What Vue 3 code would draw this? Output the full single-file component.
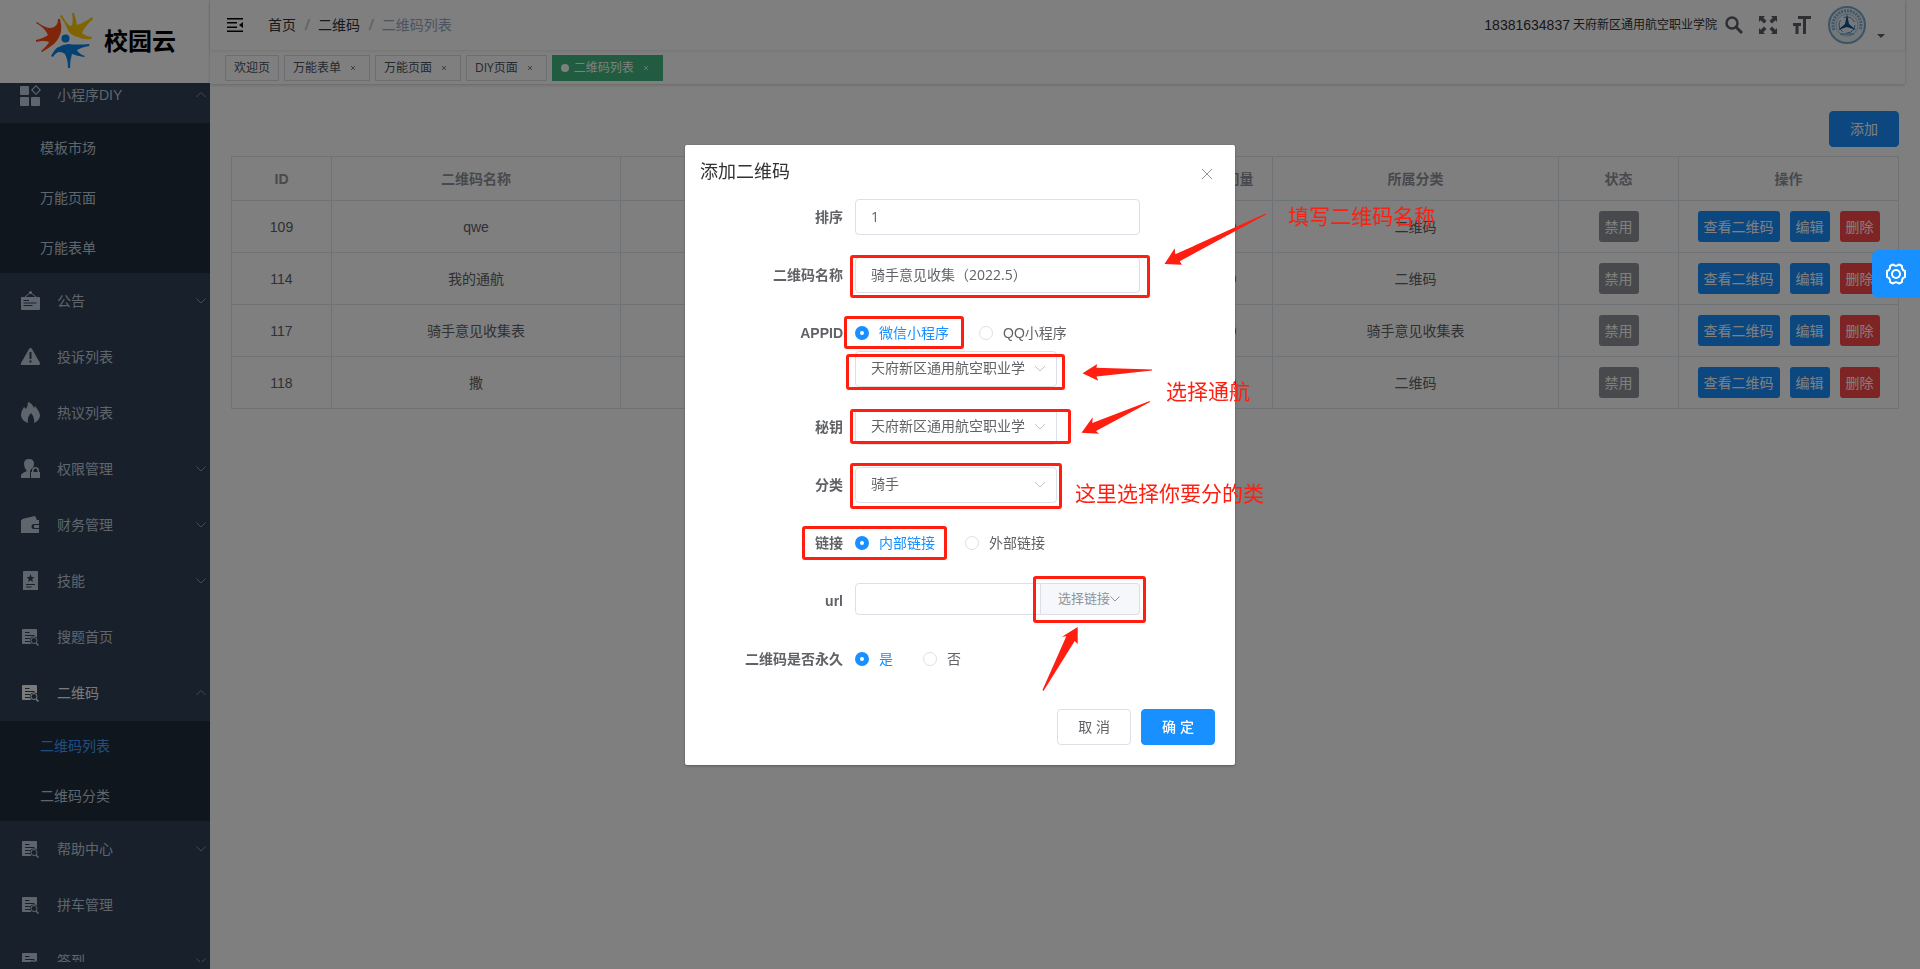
<script setup>
import { ref } from 'vue'

const menu = [
  { icon: 'grid', label: '小程序DIY', open: true, children: ['模板市场', '万能页面', '万能表单'] },
  { icon: 'board', label: '公告', arrow: true },
  { icon: 'warn', label: '投诉列表' },
  { icon: 'fire', label: '热议列表' },
  { icon: 'lock', label: '权限管理', arrow: true },
  { icon: 'wallet', label: '财务管理', arrow: true },
  { icon: 'skill', label: '技能', arrow: true },
  { icon: 'doc', label: '搜题首页' },
  { icon: 'doc', label: '二维码', open: true, active: true, children: ['二维码列表', '二维码分类'] },
  { icon: 'doc', label: '帮助中心', arrow: true },
  { icon: 'doc', label: '拼车管理' },
  { icon: 'doc', label: '签到', arrow: true }
]
const current = '二维码列表'

const tags = [
  { label: '欢迎页', fixed: true },
  { label: '万能表单' },
  { label: '万能页面' },
  { label: 'DIY页面' },
  { label: '二维码列表', active: true }
]

const rows = [
  { id: 109, name: 'qwe', type: '二维码' },
  { id: 114, name: '我的通航', type: '二维码' },
  { id: 117, name: '骑手意见收集表', type: '骑手意见收集表' },
  { id: 118, name: '撒', type: '二维码' }
]

const form = ref({
  sort: '1',
  name: '骑手意见收集（2022.5）',
  platform: 'wx',
  appid: '天府新区通用航空职业学院',
  secret: '天府新区通用航空职业学院',
  category: '骑手',
  link: 'inner',
  url: '',
  forever: 'yes'
})
</script>

<template>
  <div class="app">
    <aside class="sidebar">
      <a class="logo" href="#">
        <svg width="58" height="58" viewBox="0 0 58 58" aria-hidden="true">
          <path fill="#ff4a12" d="M1 9 Q9 15 15 15 Q22 14 22 6 L24 6 Q26 13 25 19 Q23 26 18 31 Q13 35 6 39 L5 38 Q11 33 13 29 Q8 27 0 29 L0 27 Q8 25 12 22 Q9 15 0 10 Z" />
          <path fill="#ffc800" d="M26 2 Q29 9 34 13 Q38 13 36 0 L38 0 Q40 6 41 12 Q48 10 56 4 L57 6 Q49 13 46 20 Q49 23 56 24 L55 26 Q48 27 42 24 Q34 23 31 15 Q28 8 24 3 Z" />
          <circle cx="29.500" cy="25.500" r="4" fill="#0a84e8" />
          <path fill="#0a84e8" d="M53 31 Q54 32 53 33 Q46 34 41 37 Q43 41 49 43 L48 44 Q41 43 36 41 Q34 47 34 55 L32 55 Q32 47 29 41 Q22 36 17 44 L15 43 Q20 32 32 31 Q43 32 53 31 Z" />
        </svg>
        <strong>校园云</strong>
      </a>
      <nav class="menu">
        <ul class="menu-list">
          <li v-for="item in menu" :key="item.label">
            <a class="menu-item" :class="{ active: item.active }" href="#">
              <svg class="menu-icon" width="22" height="22" viewBox="0 0 22 22" fill="currentColor" aria-hidden="true">
                <g v-if="item.icon === 'grid'">
                  <rect x="1" y="2" width="9" height="9" rx="1" />
                  <rect x="1" y="13" width="9" height="9" rx="1" />
                  <rect x="12" y="13" width="9" height="9" rx="1" />
                  <path d="M17 1 L22 6 L17 11 L12 6 Z M17 2.600 L13.600 6 L17 9.400 L20.400 6 Z" fill-rule="evenodd" />
                </g>
                <g v-else-if="item.icon === 'board'">
                  <path fill-rule="evenodd" d="M2 7 H20 Q21 7 21 8 V19 Q21 20 20 20 H3 Q2 20 2 19 Z M4.500 10 V11 H10 V10 Z M4.500 12.500 V13.500 H17.500 V12.500 Z M4.500 15 V16 H13.500 V15 Z" />
                  <path d="M6 7 L11.500 2.500 L17 7" fill="none" stroke="currentColor" />
                  <circle cx="11.500" cy="2.500" r="1.500" />
                </g>
                <path v-else-if="item.icon === 'warn'" fill-rule="evenodd" d="M11.500 2 Q12.500 2 13 3 L21 17 Q21 19 20 19 H3 Q1 19 2 17 L10 3 Q10.500 2 11.500 2 Z M10.500 6 V13 H12.500 V6 Z M10.500 14.500 V16.500 H12.500 V14.500 Z" />
                <path v-else-if="item.icon === 'fire'" d="M9 0 Q13 1 15 6 L16 4 Q21 10 21 14 Q20 19 15 21 Q16 16 12 11 Q8 15 9 21 Q2 18 2 13 Q2 9 5 5 L7 7 Q9 4 9 0 Z" />
                <g v-else-if="item.icon === 'lock'">
                  <path d="M10 1 Q15 1 15 6 Q15 8 13.500 10 Q11 11 11 14 V20 H2 V17 Q3 15 8 13 Q5 10 5 6 Q5 1 10 1 Z" />
                  <path fill-rule="evenodd" d="M12 14 H13 V12.500 Q13 9 16.500 9 Q20 9 20 12.500 V14 H21 V20 H12 Z M14.500 14 H18.500 V12.500 Q18.500 10.500 16.500 10.500 Q14.500 10.500 14.500 12.500 Z" />
                </g>
                <g v-else-if="item.icon === 'wallet'">
                  <path d="M3 5 L16 2 L18 6 H3 Z" />
                  <path fill-rule="evenodd" d="M2 6 H20 V10 H15 Q12.500 10 12.500 12.500 Q12.500 15 15 15 H20 V19 H2 Z" />
                  <path d="M15.500 11 H20 V14 H15.500 Q14 12.500 15.500 11 Z" />
                </g>
                <path v-else-if="item.icon === 'skill'" fill-rule="evenodd" d="M5 1 H18 Q19 1 19 2 V20 H4 V2 Q4 1 5 1 Z M11.500 4 L12.600 7 H15.500 L13.200 9 L14 12 L11.500 10.200 L9 12 L9.800 9 L7.500 7 H10.400 Z M7 14 V15 H16 V14 Z M7 16.500 V17.500 H12.500 V16.500 Z" />
                <g v-else>
                  <path fill-rule="evenodd" d="M4 3 H17 Q18 3 18 4 V18 H4 Q3 18 3 17 V4 Q3 3 4 3 Z M6 6 V7 H10.500 V6 Z M6 9 V10 H15.500 V9 Z M6 12 V13 H11 V12 Z M6 15 V16 H11 V15 Z" />
                  <circle cx="15" cy="14.500" r="4" fill="#304156" />
                  <circle cx="15" cy="14.500" r="3" fill="none" stroke="currentColor" />
                  <path d="M17 17 L19.500 19.500" stroke="currentColor" stroke-width="1.500" />
                </g>
              </svg>
              <span class="menu-label">{{ item.label }}</span>
              <svg v-if="item.arrow || item.open" class="menu-arrow" width="10" height="6" viewBox="0 0 10 6" fill="none" aria-hidden="true">
                <path :d="item.open ? 'M0.500 5 L5 0.500 L9.500 5' : 'M0.500 0.500 L5 5 L9.500 0.500'" stroke="#909399" />
              </svg>
            </a>
            <ul v-if="item.children" class="submenu">
              <li v-for="child in item.children" :key="child">
                <a href="#" :class="{ current: child === current }">{{ child }}</a>
              </li>
            </ul>
          </li>
        </ul>
      </nav>
    </aside>

    <div class="main">
      <header class="top">
        <div class="navbar">
          <button class="icon-btn fold" type="button" aria-label="折叠菜单">
            <svg width="16" height="14" viewBox="0 0 16 14" fill="#000" aria-hidden="true">
              <path d="M0 0 H16 V1.500 H0 Z M0 4 H10 V5.500 H0 Z M0 8.500 H10 V10 H0 Z M0 12.500 H16 V14 H0 Z M16 4 V10 L12 7 Z" />
            </svg>
          </button>
          <nav class="breadcrumb">
            <a href="#">首页</a><i>/</i><a href="#">二维码</a><i>/</i><span>二维码列表</span>
          </nav>
          <div class="user">
            <span class="phone">18381634837</span>
            <span class="org">天府新区通用航空职业学院</span>
            <button class="icon-btn search" type="button" aria-label="搜索">
              <svg width="18" height="18" viewBox="0 0 18 18" fill="none" stroke="#5a5e66" aria-hidden="true">
                <circle cx="7" cy="7" r="5.500" stroke-width="2.500" />
                <path d="M11 11 L17 17" stroke-width="3" />
              </svg>
            </button>
            <button class="icon-btn" type="button" aria-label="全屏">
              <svg width="18" height="18" viewBox="0 0 18 18" fill="#5a5e66" aria-hidden="true">
                <path d="M0 0 H6 L4.300 1.700 L7.500 5 L5 7.500 L1.700 4.300 L0 6 Z" />
                <path d="M18 0 V6 L16.300 4.300 L13 7.500 L10.500 5 L13.700 1.700 L12 0 Z" />
                <path d="M0 18 V12 L1.700 13.700 L5 10.500 L7.500 13 L4.300 16.300 L6 18 Z" />
                <path d="M18 18 H12 L13.700 16.300 L10.500 13 L13 10.500 L16.300 13.700 L18 12 Z" />
              </svg>
            </button>
            <button class="icon-btn" type="button" aria-label="字号">
              <svg width="18" height="18" viewBox="0 0 18 18" fill="#5a5e66" aria-hidden="true">
                <path d="M5 0 H18 V3 H13 V18 H10 V3 H5 Z M0 7 H8 V10 H5.500 V18 H2.500 V10 H0 Z" />
              </svg>
            </button>
            <button class="icon-btn avatar" type="button" aria-label="用户菜单">
              <svg width="38" height="38" viewBox="0 0 38 38" fill="none" aria-hidden="true">
                <circle cx="19" cy="19" r="18" fill="#e4eef5" stroke="#7ba8ca" stroke-width="2" />
                <path d="M6 24 A14 14 0 1 1 32 24" stroke="#5d93bd" stroke-width="3" stroke-dasharray="2 1" opacity="0.700" />
                <circle cx="19" cy="19" r="11" fill="#e9f2f8" stroke="#9cc0da" />
                <circle cx="19" cy="19" r="8" stroke="#4a8cc4" stroke-dasharray="13 4" />
                <path d="M19 8 L21 18 L28 24 L19 21 L10 24 L17 18 Z" fill="#14508f" />
                <path d="M12 28 H26" stroke="#4a8cc4" />
              </svg>
              <svg class="caret" width="8" height="4" viewBox="0 0 8 4" fill="#5a5e66" aria-hidden="true"><path d="M0 0 H8 L4 4 Z" /></svg>
            </button>
          </div>
        </div>
        <nav class="tags">
          <a v-for="t in tags" :key="t.label" class="tag" :class="{ active: t.active }" href="#">
            <span v-if="t.active" class="dot"></span>{{ t.label }}
            <svg v-if="!t.fixed" class="tag-close" width="16" height="16" viewBox="0 0 16 16" stroke="currentColor" aria-hidden="true"><path d="M6 6 L10 10 M10 6 L6 10" /></svg>
          </a>
        </nav>
      </header>

      <main class="content">
        <div class="toolbar"><button class="btn primary" type="button">添加</button></div>
        <table class="grid">
          <colgroup>
            <col class="c-id" /><col class="c-name" /><col /><col /><col class="c-visit" /><col /><col class="c-state" /><col class="c-op" />
          </colgroup>
          <thead>
            <tr><th>ID</th><th>二维码名称</th><th></th><th></th><th>访问量</th><th>所属分类</th><th>状态</th><th>操作</th></tr>
          </thead>
          <tbody>
            <tr v-for="r in rows" :key="r.id">
              <td>{{ r.id }}</td>
              <td>{{ r.name }}</td>
              <td></td>
              <td></td>
              <td><a class="count" href="#">0</a></td>
              <td>{{ r.type }}</td>
              <td><button class="mini info" type="button">禁用</button></td>
              <td>
                <div class="ops">
                  <button class="mini primary" type="button">查看二维码</button>
                  <button class="mini primary" type="button">编辑</button>
                  <button class="mini danger" type="button">删除</button>
                </div>
              </td>
            </tr>
          </tbody>
        </table>
      </main>
    </div>

    <div class="overlay">
      <section class="dialog" role="dialog" aria-labelledby="dlg-title">
        <header class="dialog-head">
          <h2 id="dlg-title">添加二维码</h2>
          <button class="icon-btn close" type="button" aria-label="关闭">
            <svg width="12" height="12" viewBox="0 0 12 12" stroke="#909399" aria-hidden="true"><path d="M1 1 L11 11 M11 1 L1 11" /></svg>
          </button>
        </header>
        <form class="form" @submit.prevent>
          <div class="item">
            <label class="label" for="f-sort">排序</label>
            <input id="f-sort" v-model="form.sort" class="field" type="text" />
          </div>
          <div class="item">
            <label class="label" for="f-name">二维码名称</label>
            <input id="f-name" v-model="form.name" class="field" type="text" />
          </div>
          <div class="item">
            <label class="label" for="f-appid">APPID</label>
            <div class="stack">
              <div class="radios">
                <label class="radio"><input v-model="form.platform" type="radio" name="platform" value="wx" /><span>微信小程序</span></label>
                <label class="radio"><input v-model="form.platform" type="radio" name="platform" value="qq" /><span>QQ小程序</span></label>
              </div>
              <div class="select">
                <select id="f-appid" v-model="form.appid" class="field"><option>天府新区通用航空职业学院</option></select>
                <svg width="12" height="7" viewBox="0 0 12 7" fill="none" stroke="#c0c4cc" aria-hidden="true"><path d="M1 1 L6 6 L11 1" /></svg>
              </div>
            </div>
          </div>
          <div class="item">
            <label class="label" for="f-secret">秘钥</label>
            <div class="select">
              <select id="f-secret" v-model="form.secret" class="field"><option>天府新区通用航空职业学院</option></select>
              <svg width="12" height="7" viewBox="0 0 12 7" fill="none" stroke="#c0c4cc" aria-hidden="true"><path d="M1 1 L6 6 L11 1" /></svg>
            </div>
          </div>
          <div class="item">
            <label class="label" for="f-cat">分类</label>
            <div class="select">
              <select id="f-cat" v-model="form.category" class="field"><option>骑手</option></select>
              <svg width="12" height="7" viewBox="0 0 12 7" fill="none" stroke="#c0c4cc" aria-hidden="true"><path d="M1 1 L6 6 L11 1" /></svg>
            </div>
          </div>
          <div class="item" role="radiogroup" aria-labelledby="l-link">
            <span id="l-link" class="label">链接</span>
            <div class="radios">
              <label class="radio"><input v-model="form.link" type="radio" name="link" value="inner" /><span>内部链接</span></label>
              <label class="radio"><input v-model="form.link" type="radio" name="link" value="outer" /><span>外部链接</span></label>
            </div>
          </div>
          <div class="item">
            <label class="label" for="f-url">url</label>
            <div class="group">
              <input id="f-url" v-model="form.url" class="field" type="text" />
              <button class="append" type="button">选择链接<svg width="10" height="6" viewBox="0 0 10 6" fill="none" stroke="currentColor" aria-hidden="true"><path d="M0.500 0.500 L5 5 L9.500 0.500" /></svg></button>
            </div>
          </div>
          <div class="item" role="radiogroup" aria-labelledby="l-forever">
            <span id="l-forever" class="label">二维码是否永久</span>
            <div class="radios">
              <label class="radio"><input v-model="form.forever" type="radio" name="forever" value="yes" /><span>是</span></label>
              <label class="radio"><input v-model="form.forever" type="radio" name="forever" value="no" /><span>否</span></label>
            </div>
          </div>
        </form>
        <footer class="dialog-foot">
          <button class="btn plain" type="button">取 消</button>
          <button class="btn primary strong" type="button">确 定</button>
        </footer>

        <svg class="marks" width="550" height="620" viewBox="0 0 550 620" aria-hidden="true">
          <g fill="none" stroke="#ff1e10" stroke-width="3">
            <rect x="166.500" y="111.500" width="297" height="40" rx="1.500" />
            <rect x="160.500" y="172.500" width="117" height="30" rx="1.500" />
            <rect x="162.500" y="210.500" width="216" height="33" rx="1.500" />
            <rect x="166.500" y="265.500" width="218" height="32" rx="1.500" />
            <rect x="166.500" y="319.500" width="209" height="43" rx="1.500" />
            <rect x="118.500" y="382.500" width="142" height="31" rx="1.500" />
            <rect x="349.500" y="432.500" width="110" height="44" rx="1.500" />
          </g>
          <g fill="#ff1e10">
            <path d="M479.500 119 L489.700 103.300 L490.300 109.300 L580.700 68.500 L581 69.500 L494.700 116.300 L497 119.700 Z" />
            <path d="M397.500 228.300 L412.300 219 L411.300 222.700 L467 224.500 V225.500 L411.500 231.500 L413.300 235.700 Z" />
            <path d="M396.500 287.700 L407.700 272.300 L407.300 278 L464.700 256 L465 257 L411 286 L414 288.700 Z" />
            <path d="M392.700 482 L377 491.700 L381.300 491.300 L357.500 545 L358.500 546 L389.700 496 L392.700 499 Z" />
          </g>
        </svg>
        <p class="note note-name">填写二维码名称</p>
        <p class="note note-app">选择通航</p>
        <p class="note note-cat">这里选择你要分的类</p>
      </section>
    </div>

    <button class="settings" type="button" aria-label="设置">
      <svg width="24" height="24" viewBox="0 0 24 24" fill="none" stroke="#fff" aria-hidden="true">
        <path stroke-width="2" stroke-linejoin="round" d="M9 2.500 Q12 5 15 2.500 L18 4 Q17.500 8 21 9 V15 Q17.500 16 18 20 L15 21.500 Q12 19 9 21.500 L6 20 Q6.500 16 3 15 V9 Q6.500 8 6 4 Z" />
        <circle cx="12" cy="12" r="4" stroke-width="2" />
      </svg>
    </button>
  </div>
</template>

<style>
body {
  margin: 0;
  background: #fff;
}
</style>

<style scoped>
* {
  box-sizing: border-box;
}
.app {
  display: flex;
  height: 100vh;
  overflow: hidden;
  font: 14px/20px "Liberation Sans", "Noto Sans CJK SC", sans-serif;
  color: #606266;
}
a {
  color: inherit;
  text-decoration: none;
}
ul {
  list-style: none;
  margin: 0;
  padding: 0;
}
button {
  font: inherit;
  cursor: pointer;
  white-space: nowrap;
}
svg {
  display: block;
  flex: none;
}
.icon-btn {
  padding: 0;
  border: 0;
  background: none;
}

/* sidebar */
.sidebar {
  display: flex;
  flex-direction: column;
  flex: none;
  width: 210px;
  padding-bottom: 7px;
  background: #304156;
}
.logo {
  display: flex;
  flex: none;
  align-items: center;
  gap: 10px;
  height: 83px;
  padding-left: 36px;
  background: #fff;
  color: #000;
}
.logo strong {
  font-size: 24px;
  font-weight: 700;
  line-height: 30px;
}
.menu {
  flex: 1;
  min-height: 0;
  overflow: hidden;
}
.menu-list {
  margin-top: -16px;
}
.menu-item {
  display: flex;
  align-items: center;
  height: 56px;
  padding: 0 4px 0 19px;
  color: #bfcbd9;
}
.menu-item.active {
  color: #f4f4f5;
}
.menu-label {
  flex: 1;
  margin-left: 16px;
}
.submenu {
  background: #1f2d3d;
}
.submenu a {
  display: block;
  padding-left: 40px;
  line-height: 50px;
  color: #bfcbd9;
}
.submenu a.current {
  color: #409eff;
}

/* header */
.main {
  flex: 1;
  min-width: 0;
}
.top {
  margin-right: 15px;
  box-shadow: 0 1px 3px rgba(0, 0, 0, 0.2);
}
.navbar {
  display: flex;
  align-items: center;
  height: 50px;
  padding: 0 20px 0 17px;
  box-shadow: 0 1px 3px rgba(0, 21, 41, 0.1);
}
.breadcrumb {
  display: flex;
  margin-left: 25px;
  color: #303133;
}
.breadcrumb i {
  margin: 0 9px;
  font-weight: bold;
  color: #c0c4cc;
}
.breadcrumb span {
  color: #97a8be;
}
.user {
  display: flex;
  align-items: center;
  gap: 16px;
  margin-left: auto;
  color: #303133;
}
.phone {
  margin-right: -13px;
}
.org {
  margin-right: -8px;
  font-size: 12px;
}
.avatar {
  display: flex;
  align-items: flex-end;
  gap: 11px;
  margin-left: 1px;
}
.caret {
  margin-bottom: 6px;
}
.tags {
  display: flex;
  align-items: flex-start;
  gap: 5px;
  height: 34px;
  padding: 5px 15px 0;
}
.tag {
  display: flex;
  align-items: center;
  height: 26px;
  padding: 0 8px;
  border: 1px solid #d8dce5;
  font-family: "Open Sans", "Noto Sans CJK SC", sans-serif;
  font-size: 12px;
  color: #495060;
}
.tag.active {
  border-color: #42b983;
  background: #42b983;
  color: #fff;
}
.dot {
  width: 8px;
  height: 8px;
  margin-right: 5px;
  border-radius: 50%;
  background: #fff;
}
.tag-close {
  margin-left: 4px;
  opacity: 0.7;
}

/* content */
.content {
  padding: 27px 21px 0;
}
.toolbar {
  display: flex;
  justify-content: flex-end;
  margin-bottom: 9px;
}
.btn {
  height: 36px;
  padding: 0 20px;
  border: 1px solid #dcdfe6;
  border-radius: 4px;
  background: #fff;
  color: #606266;
}
.btn.primary {
  border-color: #1890ff;
  background: #1890ff;
  color: #fff;
}
.btn.strong {
  font-weight: 500;
}
.grid {
  width: 100%;
  table-layout: fixed;
  border-collapse: collapse;
  text-align: center;
}
.grid th,
.grid td {
  padding: 0;
  border: 1px solid #dfe6ec;
}
.grid th {
  height: 44px;
  color: #909399;
}
.grid td {
  height: 52px;
}
.c-id {
  width: 100px;
}
.c-name {
  width: 289px;
}
.c-visit {
  width: 80px;
}
.c-state {
  width: 120px;
}
.c-op {
  width: 220px;
}
.count {
  color: #337ab7;
}
.ops {
  display: flex;
  justify-content: center;
  gap: 10px;
}
.mini {
  height: 31px;
  padding: 0 6px;
  border: 0;
  border-radius: 3px;
  color: #fff;
}
.mini.primary {
  background: #1890ff;
}
.mini.info {
  background: #909399;
}
.mini.danger {
  background: #ff4949;
}

/* dialog */
.overlay {
  position: fixed;
  inset: 0;
  z-index: 10;
  padding-top: round(down, 15vh, 1px);
  background: rgba(0, 0, 0, 0.5);
}
.dialog {
  position: relative;
  width: 550px;
  margin: 0 auto;
  padding-bottom: 20px;
  border-radius: 2px;
  background: #fff;
  box-shadow: 0 1px 3px rgba(0, 0, 0, 0.3);
}
.dialog-head {
  display: flex;
  align-items: center;
  justify-content: space-between;
  height: 54px;
  padding: 0 22px 0 15px;
}
.dialog-head h2 {
  margin: 0;
  font-size: 18px;
  font-weight: 400;
  line-height: 24px;
  color: #303133;
}
.close {
  margin-top: 4px;
}
.form {
  display: flex;
  flex-direction: column;
  gap: 22px;
  padding-right: 95px;
}
.item {
  display: flex;
  align-items: flex-start;
}
.label {
  flex: none;
  width: 170px;
  padding-right: 12px;
  line-height: 36px;
  font-weight: 700;
  text-align: right;
}
.field {
  flex: 1;
  width: 100%;
  min-width: 0;
  height: 36px;
  padding: 0 15px 2px;
  border: 1px solid #dcdfe6;
  border-radius: 4px;
  outline: 0;
  background: #fff;
  font: 14px/20px "Open Sans", "Noto Sans CJK SC", sans-serif;
  color: #606266;
}
.select {
  position: relative;
  width: 202px;
}
.select .field {
  display: block;
  padding-right: 30px;
  appearance: none;
}
.select svg {
  position: absolute;
  top: 14px;
  right: 11px;
  pointer-events: none;
}
.radios {
  display: flex;
  gap: 30px;
  align-items: center;
  height: 36px;
}
.radio {
  display: flex;
  align-items: center;
  gap: 10px;
}
.radio input {
  width: 14px;
  height: 14px;
  margin: 0;
  border: 1px solid #dcdfe6;
  border-radius: 50%;
  background: #fff;
  appearance: none;
}
.radio input:checked {
  border: 5px solid #1890ff;
}
.radio input:checked + span {
  color: #1890ff;
}
.group {
  display: flex;
  flex: 1;
  height: 36px;
}
.group .field {
  height: 32px;
  border-radius: 4px 0 0 4px;
}
.append {
  display: flex;
  align-items: center;
  justify-content: center;
  width: 99px;
  height: 32px;
  padding: 0 2px 0 0;
  border: 1px solid #dcdfe6;
  border-left: 0;
  border-radius: 0 4px 4px 0;
  background: #f5f7fa;
  font-size: 13px;
  color: #909399;
}
.dialog-foot {
  display: flex;
  justify-content: flex-end;
  gap: 10px;
  padding: 32px 20px 0;
}

/* guide marks drawn over the dialog */
.marks {
  position: absolute;
  top: 0;
  left: 0;
  overflow: visible;
  pointer-events: none;
}
.note {
  position: absolute;
  margin: 0;
  font-size: 21px;
  line-height: 28px;
  white-space: nowrap;
  color: #ff1e10;
}
.note-name {
  top: 58px;
  left: 603px;
}
.note-app {
  top: 233px;
  left: 481px;
}
.note-cat {
  top: 335px;
  left: 390px;
}

.settings {
  display: flex;
  align-items: center;
  justify-content: center;
  position: fixed;
  top: 250px;
  right: 0;
  z-index: 20;
  width: 48px;
  height: 48px;
  padding: 0;
  border: 0;
  border-radius: 6px 0 0 6px;
  background: #1890ff;
}
</style>
